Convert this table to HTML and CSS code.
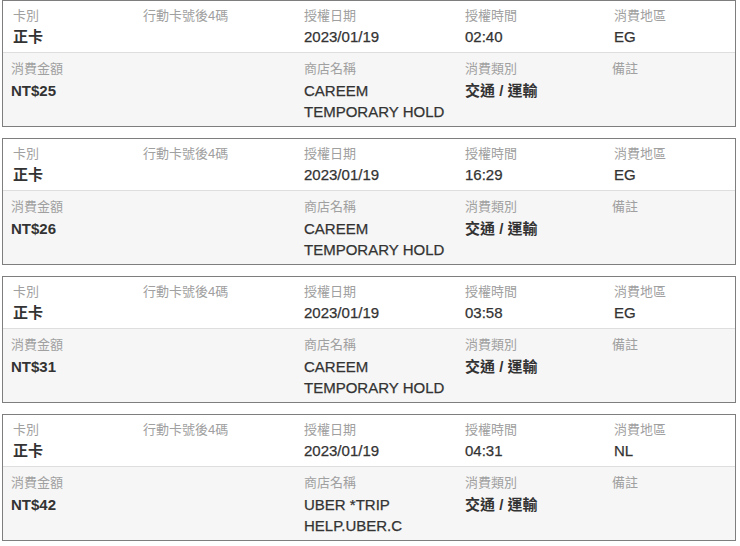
FILE: index.html
```html
<!DOCTYPE html>
<html lang="zh-Hant">
<head>
<meta charset="utf-8">
<link rel="stylesheet" href="styles.css">
</head>
<body>
<div class="list">
  <div class="card">
    <div class="row top">
      <div class="cell"><div class="label">卡別</div><div class="value strong">正卡</div></div>
      <div class="cell"><div class="label">行動卡號後4碼</div><div class="value"></div></div>
      <div class="cell"><div class="label">授權日期</div><div class="value">2023/01/19</div></div>
      <div class="cell"><div class="label">授權時間</div><div class="value">02:40</div></div>
      <div class="cell"><div class="label">消費地區</div><div class="value">EG</div></div>
    </div>
    <div class="row bottom">
      <div class="cell"><div class="label">消費金額</div><div class="value strong">NT$25</div></div>
      <div class="cell"><div class="label">商店名稱</div><div class="value store">CAREEM TEMPORARY HOLD</div></div>
      <div class="cell"><div class="label">消費類別</div><div class="value strong">交通 / 運輸</div></div>
      <div class="cell"><div class="label">備註</div><div class="value"></div></div>
    </div>
  </div>
  <div class="card">
    <div class="row top">
      <div class="cell"><div class="label">卡別</div><div class="value strong">正卡</div></div>
      <div class="cell"><div class="label">行動卡號後4碼</div><div class="value"></div></div>
      <div class="cell"><div class="label">授權日期</div><div class="value">2023/01/19</div></div>
      <div class="cell"><div class="label">授權時間</div><div class="value">16:29</div></div>
      <div class="cell"><div class="label">消費地區</div><div class="value">EG</div></div>
    </div>
    <div class="row bottom">
      <div class="cell"><div class="label">消費金額</div><div class="value strong">NT$26</div></div>
      <div class="cell"><div class="label">商店名稱</div><div class="value store">CAREEM TEMPORARY HOLD</div></div>
      <div class="cell"><div class="label">消費類別</div><div class="value strong">交通 / 運輸</div></div>
      <div class="cell"><div class="label">備註</div><div class="value"></div></div>
    </div>
  </div>
  <div class="card">
    <div class="row top">
      <div class="cell"><div class="label">卡別</div><div class="value strong">正卡</div></div>
      <div class="cell"><div class="label">行動卡號後4碼</div><div class="value"></div></div>
      <div class="cell"><div class="label">授權日期</div><div class="value">2023/01/19</div></div>
      <div class="cell"><div class="label">授權時間</div><div class="value">03:58</div></div>
      <div class="cell"><div class="label">消費地區</div><div class="value">EG</div></div>
    </div>
    <div class="row bottom">
      <div class="cell"><div class="label">消費金額</div><div class="value strong">NT$31</div></div>
      <div class="cell"><div class="label">商店名稱</div><div class="value store">CAREEM TEMPORARY HOLD</div></div>
      <div class="cell"><div class="label">消費類別</div><div class="value strong">交通 / 運輸</div></div>
      <div class="cell"><div class="label">備註</div><div class="value"></div></div>
    </div>
  </div>
  <div class="card">
    <div class="row top">
      <div class="cell"><div class="label">卡別</div><div class="value strong">正卡</div></div>
      <div class="cell"><div class="label">行動卡號後4碼</div><div class="value"></div></div>
      <div class="cell"><div class="label">授權日期</div><div class="value">2023/01/19</div></div>
      <div class="cell"><div class="label">授權時間</div><div class="value">04:31</div></div>
      <div class="cell"><div class="label">消費地區</div><div class="value">NL</div></div>
    </div>
    <div class="row bottom">
      <div class="cell"><div class="label">消費金額</div><div class="value strong">NT$42</div></div>
      <div class="cell"><div class="label">商店名稱</div><div class="value store">UBER *TRIP HELP.UBER.C</div></div>
      <div class="cell"><div class="label">消費類別</div><div class="value strong">交通 / 運輸</div></div>
      <div class="cell"><div class="label">備註</div><div class="value"></div></div>
    </div>
  </div>
</div>
</body>
</html>
```

FILE: styles.css
```css
html, body {
  margin: 0;
  padding: 0;
  background: #ffffff;
}
body {
  font-family: "Liberation Sans", "Noto Sans CJK TC", sans-serif;
  color: #333333;
}
.list {
  display: flex;
  flex-direction: column;
  gap: 11px;
  padding: 0 4px 0 2px;
}
.card {
  border: 1px solid #7e7e7e;
  background: #ffffff;
}
.row {
  display: grid;
}
.row.top {
  grid-template-columns: 130px 161px 161px 149px 1fr;
  padding: 6px 0 4px 10px;
  border-bottom: 1px solid #dedede;
}
.row.bottom {
  grid-template-columns: 293px 161px 147px 1fr;
  padding: 7px 0 4px 8px;
  background: #f6f6f6;
  min-height: 62px;
}
.label {
  font-size: 13px;
  line-height: 18px;
  color: #a0a0a0;
}
.value {
  font-size: 15px;
  line-height: 21px;
  color: #333333;
  min-height: 21px;
  -webkit-text-stroke: 0.25px #333333;
}
.top .value {
  margin-top: 1px;
  line-height: 22px;
}
.bottom .value {
  margin-top: 2px;
}
.value.strong {
  font-weight: 700;
  color: #333333;
  -webkit-text-stroke: 0;
}
.value.store {
  max-width: 150px;
}
```
